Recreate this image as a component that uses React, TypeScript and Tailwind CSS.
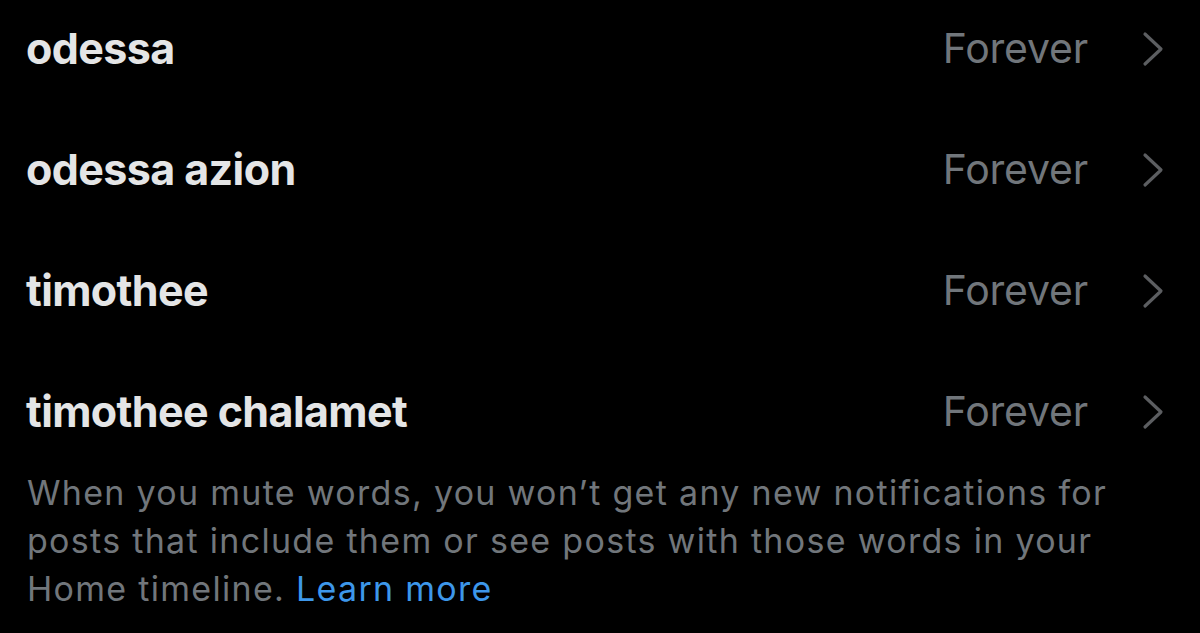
import React from "react";

const rows = ["odessa", "odessa azion", "timothee", "timothee chalamet"];

function Chevron() {
  return (
    <svg width="22" height="36" viewBox="0 0 22 36" fill="none" className="shrink-0">
      <path d="M3 3 L19 18 L3 33" stroke="#5c5e61" strokeWidth="3.2" strokeLinecap="round" strokeLinejoin="round" />
    </svg>
  );
}

export default function App() {
  return (
    <div
      className="w-[1200px] h-[633px] bg-black overflow-hidden"
      style={{ fontFamily: "Inter, 'Noto Sans', sans-serif" }}
    >
      <div className="-mt-[12px]">
        {rows.map((r) => (
          <div key={r} className="h-[121px] flex items-center pl-[26px] pr-[36px]">
            <div className="flex-1 text-[43px] font-bold text-[#e4e5e6] tracking-[-0.6px]">{r}</div>
            <div className="text-[41px] text-[#71767b] mr-[54px] tracking-[-0.2px]">Forever</div>
            <Chevron />
          </div>
        ))}
      </div>
      <div className="pl-[27px] text-[34px] leading-[48px] text-[#71767b] tracking-[1.3px] whitespace-nowrap -mt-[3px]">
        When you mute words, you won’t get any new notifications for
        <br />
        posts that include them or see posts with those words in your
        <br />
        Home timeline. <span className="text-[#3d97ea]">Learn more</span>
      </div>
    </div>
  );
}
